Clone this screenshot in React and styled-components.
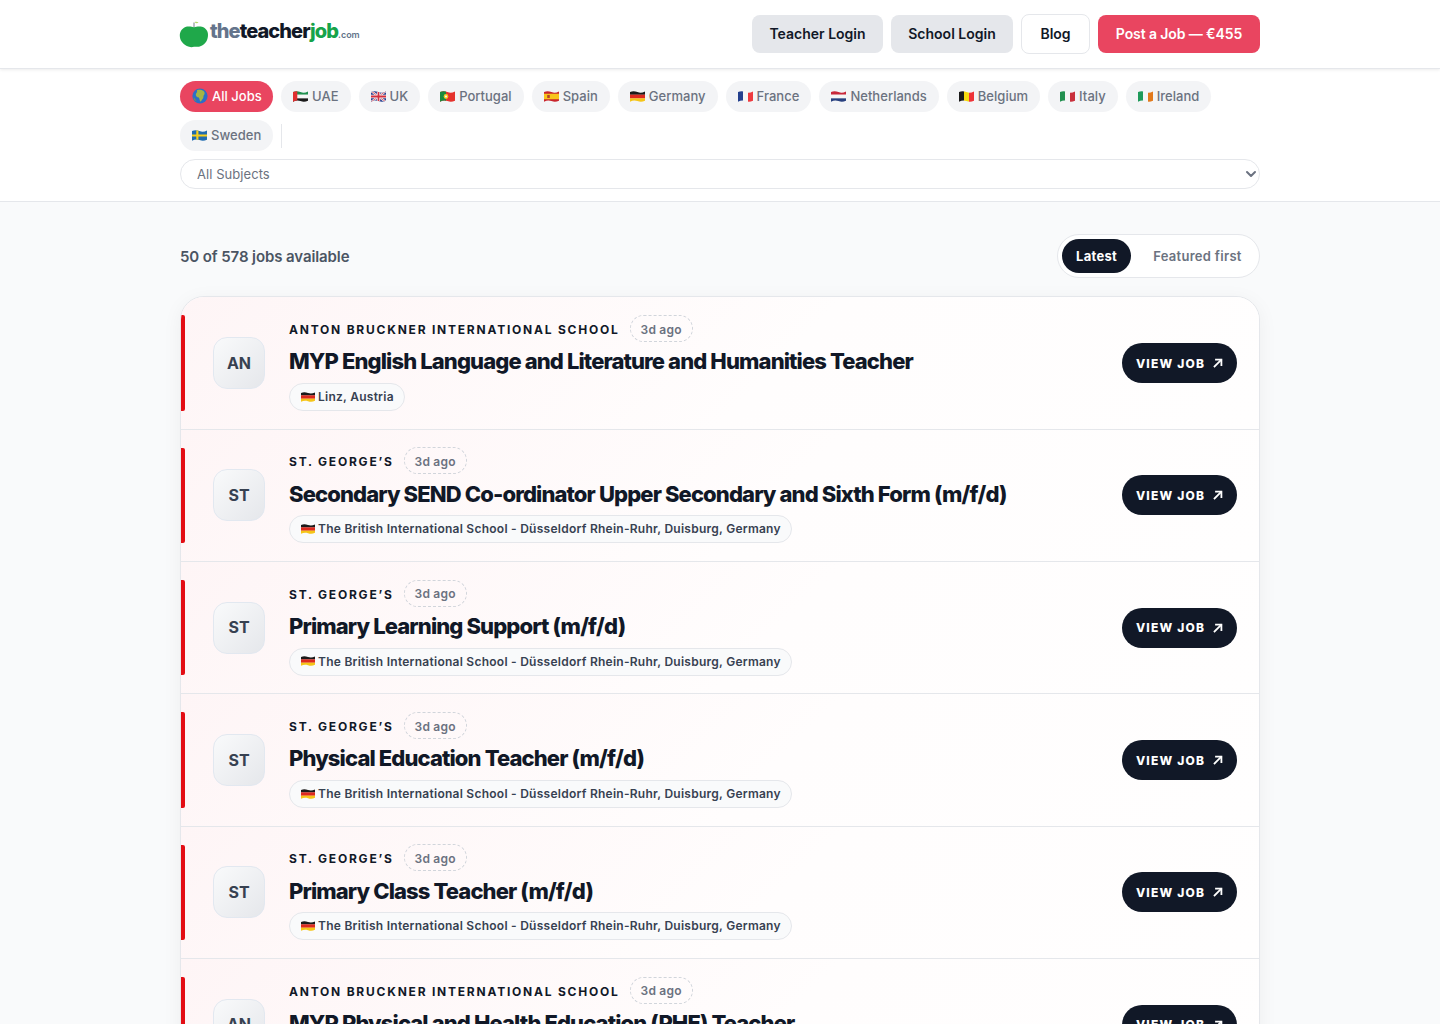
import React, { useId } from 'react';
import styled, { createGlobalStyle } from 'styled-components';

const GlobalStyle = createGlobalStyle`
    * { box-sizing: border-box; }
    html, body { margin: 0; padding: 0; background: #f9fafb; overflow-x: hidden; }
    body { font-family: Inter, "Liberation Sans", sans-serif; color: #111827; }
    ::-webkit-scrollbar { display: none; }
`

const Header = styled.header`
    height: 69px;
    background: #fff;
    border-bottom: 1px solid #e5e7eb;
    box-shadow: 0 1px 3px rgba(0, 0, 0, 0.08);
    position: relative;
    z-index: 2;
`
const Wrap = styled.div`
    width: 1080px;
    margin: 0 auto;
`
const HeaderInner = styled(Wrap)`
    height: 68px;
    display: flex;
    align-items: center;
    justify-content: space-between;
`
const Logo = styled.a`
    display: flex;
    align-items: center;
    height: 30px;
`
const AppleSvg = styled.svg`
    margin-left: -1px;
`
const LogoText = styled.span`
    font-size: 20px;
    font-weight: 800;
    letter-spacing: -0.92px;
    line-height: 30px;
    margin-left: 1px;
    margin-top: -2px;
`
const LogoPart = styled.span`
    color: ${p => p.$color};
`
const LogoCom = styled.span`
    font-size: 9px;
    font-weight: 600;
    letter-spacing: 0;
    color: #64748b;
`
const Nav = styled.nav`
    display: flex;
    gap: 8px;
    align-items: center;
`
const NavButton = styled.a`
    width: ${p => p.$width}px;
    height: ${p => p.$variant === 'outline' ? '40px' : '38px'};
    display: flex;
    align-items: center;
    justify-content: center;
    padding-bottom: 1px;
    border-radius: 8px;
    font-size: 14px;
    font-weight: 600;
    letter-spacing: ${p => p.$variant === 'primary' ? '-0.1px' : '0'};
    color: ${p => p.$variant === 'primary' ? '#fff' : '#111827'};
    background: ${p => p.$variant === 'primary' ? '#e94560' : p.$variant === 'outline' ? '#fff' : '#e5e7eb'};
    border: ${p => p.$variant === 'outline' ? '1px solid #e5e7eb' : 'none'};
`

const Filters = styled.section`
    background: #fff;
    border-bottom: 1px solid #e5e7eb;
    height: 133px;
    padding-top: 12px;
`
const PillRow = styled.div`
    display: flex;
    flex-wrap: wrap;
    gap: 8px;
    align-items: center;
`
const Pill = styled.a`
    height: 31px;
    padding: 0 ${p => p.$active ? '11.2px' : '12px'} 1px 12px;
    display: flex;
    align-items: center;
    gap: 4px;
    border-radius: 16px;
    font-size: 13px;
    font-weight: 500;
    letter-spacing: 0.025px;
    white-space: nowrap;
    color: ${p => p.$active ? '#fff' : '#6b7280'};
    background: ${p => p.$active ? '#e94560' : '#f3f4f6'};
`
const Divider = styled.span`
    width: 1px;
    height: 24px;
    background: #e5e7eb;
`
const SelectBox = styled.div`
    position: relative;
    margin-top: 8px;
`
const Select = styled.select`
    display: block;
    width: 100%;
    height: 30px;
    appearance: none;
    background: #fff;
    border: 1px solid #e5e7eb;
    border-radius: 15px;
    padding: 0 16px;
    font-family: inherit;
    font-size: 13px;
    letter-spacing: 0.06px;
    color: #6b7280;
`
const Chevron = styled.svg`
    position: absolute;
    right: 1px;
    top: 9px;
    pointer-events: none;
`

const Main = styled(Wrap)`
    padding-top: 32px;
`
const CountRow = styled.div`
    display: flex;
    align-items: center;
    justify-content: space-between;
    height: 44px;
    margin-bottom: 18.4px;
`
const Count = styled.p`
    margin: 0;
    font-size: 15px;
    font-weight: 600;
    letter-spacing: -0.1px;
    color: #4b5563;
`
const SortToggle = styled.div`
    height: 44px;
    width: 203px;
    display: flex;
    align-items: center;
    padding: 0 4px;
    background: #fff;
    border: 1px solid #e5e7eb;
    border-radius: 22px;
`
const SortOption = styled.span`
    height: 34px;
    padding: 0 14px;
    margin-right: ${p => p.$active ? '8px' : '0'};
    display: flex;
    align-items: center;
    border-radius: 17px;
    font-size: 13px;
    font-weight: ${p => p.$active ? 700 : 600};
    letter-spacing: 0.3px;
    white-space: nowrap;
    color: ${p => p.$active ? '#fff' : '#6b7280'};
    background: ${p => p.$active ? '#111827' : 'transparent'};
`

const JobList = styled.div`
    background: #fff;
    border: 1px solid #e5e7eb;
    border-radius: 24px;
    box-shadow: 0 4px 20px rgba(15, 23, 42, 0.05);
    overflow: hidden;
`
const JobRow = styled.article`
    position: relative;
    height: 132.35px;
    display: flex;
    align-items: center;
    padding: 0 22px 0 32px;
    border-bottom: 1px solid #e5e7eb;
    background: linear-gradient(135deg, #fef5f6 0%, #fffdfd 55%, #fffefe 100%);
`
const RedBar = styled.span`
    position: absolute;
    left: 0;
    top: 18px;
    bottom: 18px;
    width: 4px;
    border-radius: 0 2px 2px 0;
    background: #e30d14;
`
const Avatar = styled.div`
    width: 52px;
    height: 52px;
    flex: none;
    display: flex;
    align-items: center;
    justify-content: center;
    padding-bottom: 1px;
    border: 1px solid #e2e8f0;
    border-radius: 14px;
    background: linear-gradient(135deg, #f9fafb, #e5e7eb);
    font-size: 16px;
    font-weight: 700;
    color: #374151;
`
const JobBody = styled.div`
    flex: 1;
    min-width: 0;
    margin-left: 24px;
`
const MetaRow = styled.div`
    display: flex;
    align-items: center;
    gap: 10px;
    height: 27px;
`
const School = styled.span`
    padding-top: 2px;
    font-size: 12px;
    font-weight: 700;
    letter-spacing: 1.78px;
    color: #111827;
    text-transform: uppercase;
`
const Posted = styled.span`
    height: 27px;
    padding: 1px 10px 0;
    display: flex;
    align-items: center;
    border: 1px dashed #d1d5db;
    border-radius: 14px;
    font-size: 12px;
    font-weight: 600;
    letter-spacing: 0.2px;
    color: #6b7280;
`
const Title = styled.h2`
    margin: 4.4px 0 6.6px;
    font-size: 22px;
    line-height: 30px;
    font-weight: 800;
    letter-spacing: -0.88px;
    color: #111827;
`
const Location = styled.span`
    display: inline-flex;
    align-items: center;
    gap: 3px;
    height: 28px;
    padding: 0 10px 1px 11px;
    background: #f9fafb;
    border: 1px solid #e5e7eb;
    border-radius: 14px;
    font-size: 12px;
    font-weight: 600;
    letter-spacing: 0.255px;
    color: #374151;
`
const ViewButton = styled.a`
    width: 115px;
    height: 40px;
    flex: none;
    display: flex;
    align-items: center;
    justify-content: center;
    gap: 8px;
    border-radius: 20px;
    background: #111827;
    color: #fff;
    font-size: 12px;
    font-weight: 800;
    letter-spacing: 1.2px;
`

const stripes = {
    de: { dir: 'h', c: ['#1a1a1a', '#dd2a1f', '#f5c518'] },
    fr: { dir: 'v', c: ['#24408e', '#f5f5f5', '#ee3a3f'] },
    nl: { dir: 'h', c: ['#c8283a', '#f5f5f5', '#28407f'] },
    be: { dir: 'v', c: ['#1a1a1a', '#f5d90f', '#ee3338'] },
    it: { dir: 'v', c: ['#23904f', '#f5f5f5', '#c9303c'] },
    ie: { dir: 'v', c: ['#1f9a5a', '#f5f5f5', '#e27a1c'] },
}

// flag emoji are drawn by hand, there's no colour emoji font to rely on
const FlagArt = ({ code }) => {
    if (stripes[code]) {
        const { dir, c } = stripes[code]
        return c.map((col, i) => dir === 'h'
            ? <rect key={i} x="0" y={i * 10 / 3} width="14" height={10 / 3 + 0.1} fill={col} />
            : <rect key={i} x={i * 14 / 3} y="0" width={14 / 3 + 0.1} height="10" fill={col} />)
    }
    if (code === 'ae') return (
        <>
            <rect width="14" height="3.4" fill="#1f8f4e" />
            <rect y="3.4" width="14" height="3.3" fill="#f5f5f5" />
            <rect y="6.7" width="14" height="3.3" fill="#1a1a1a" />
            <rect width="4" height="10" fill="#e02f2f" />
        </>
    )
    if (code === 'uk') return (
        <>
            <rect width="14" height="10" fill="#2a3f8f" />
            <path d="M0 0L14 10M14 0L0 10" stroke="#f5f5f5" strokeWidth="2" />
            <path d="M0 0L14 10M14 0L0 10" stroke="#d3303f" strokeWidth="0.7" />
            <path d="M7 0V10M0 5H14" stroke="#f5f5f5" strokeWidth="3" />
            <path d="M7 0V10M0 5H14" stroke="#d3303f" strokeWidth="1.6" />
        </>
    )
    if (code === 'pt') return (
        <>
            <rect width="14" height="10" fill="#e5322d" />
            <rect width="5.6" height="10" fill="#1c8a3f" />
            <circle cx="5.6" cy="5" r="2.2" fill="#f4c61f" />
            <circle cx="5.6" cy="5" r="1" fill="#f5f5f5" />
        </>
    )
    if (code === 'es') return (
        <>
            <rect width="14" height="10" fill="#c9252c" />
            <rect y="2.5" width="14" height="5" fill="#f8c51c" />
            <rect x="3" y="3.6" width="2.4" height="2.8" fill="#b3432a" />
        </>
    )
    if (code === 'se') return (
        <>
            <rect width="14" height="10" fill="#1f6bb0" />
            <path d="M5 0V10M0 5H14" stroke="#f8cf1c" strokeWidth="2" />
        </>
    )
    return null
}

const FlagSvg = styled.svg`
    flex: none;
`
const Flag = ({ code, small }) => {
    const id = useId()
    return (
        <FlagSvg width={small ? 14 : 15} height={small ? 10 : 11} viewBox="0 0 14 10" preserveAspectRatio="none">
            <clipPath id={id}>
                <path d="M0 1C2.5 0 4.5 .2 7 1 9.5 1.8 11.5 1.6 14 .4V8.8C11.5 10 9.5 10 7 9.2 4.5 8.4 2.5 8.6 0 9.8Z" />
            </clipPath>
            <g clipPath={`url(#${id})`}>
                <FlagArt code={code} />
            </g>
        </FlagSvg>
    )
}
const Globe = () => (
    <svg width="16" height="16" viewBox="0 0 16 16">
        <circle cx="8" cy="8" r="7.6" fill="#2b6fc7" />
        <path d="M5 2.2C7.4 1.2 10.6 1.8 12 3.4 13 5 12.7 6 11.8 7.2 11 8.4 12 9.4 10.6 11 9.6 12.2 9 13.6 8.2 13.4 7.4 12 7.6 10.6 6.8 9.6 5 9.4 3.6 8.2 3.8 6.6 4 5 5.6 4.6 5 2.2Z" fill="#a4b545" />
        <path d="M1.4 9.5C2.6 10 3.6 11.6 4.4 13.6 2.8 12.8 1.8 11.2 1.4 9.5Z" fill="#7f9a3c" />
    </svg>
)
const AppleLogo = () => (
    <AppleSvg width="30" height="27" viewBox="0 0 30 27">
        <path d="M15 1.5V6" stroke="#6b7280" strokeWidth="0.9" fill="none" />
        <path d="M15.5 1C17 0.4 18.6 0.6 19.6 1.8 18 2.6 16.6 2.4 15.5 1Z" fill="#b6d96a" />
        <path d="M8 5.6C10.8 5 13 5.8 15 6.2 17 5.8 20 5 23 5.8 27 7 29 10.4 29 14 29 19 26.5 23 22 25 19.6 26.2 17.4 25.6 15 25.8 12.6 26.4 10 26.2 7.8 25 3.4 22.8 0.8 19 0.8 14.6 0.8 10.4 3.6 6.6 8 5.6Z" fill="#1fa84a" />
    </AppleSvg>
)
const ArrowIcon = () => (
    <svg width="10" height="10" viewBox="0 0 10 10" fill="none" stroke="#fff" strokeWidth="1.8" strokeLinecap="square">
        <path d="M1.6 8.4L8 2" />
        <path d="M3 1.6H8.4V7" />
    </svg>
)

const countries = [
    ['ae', 'UAE'], ['uk', 'UK'], ['pt', 'Portugal'], ['es', 'Spain'],
    ['de', 'Germany'], ['fr', 'France'], ['nl', 'Netherlands'], ['be', 'Belgium'],
    ['it', 'Italy'], ['ie', 'Ireland'], ['se', 'Sweden'],
]

const BRITISH = 'The British International School - Düsseldorf Rhein-Ruhr, Duisburg, Germany'
const jobs = [
    { initials: 'AN', school: 'Anton Bruckner International School', title: 'MYP English Language and Literature and Humanities Teacher', place: 'Linz, Austria' },
    { initials: 'ST', school: 'St. George’s', title: 'Secondary SEND Co-ordinator Upper Secondary and Sixth Form (m/f/d)', place: BRITISH },
    { initials: 'ST', school: 'St. George’s', title: 'Primary Learning Support (m/f/d)', place: BRITISH },
    { initials: 'ST', school: 'St. George’s', title: 'Physical Education Teacher (m/f/d)', place: BRITISH },
    { initials: 'ST', school: 'St. George’s', title: 'Primary Class Teacher (m/f/d)', place: BRITISH },
    { initials: 'AN', school: 'Anton Bruckner International School', title: 'MYP Physical and Health Education (PHE) Teacher', place: 'Linz, Austria' },
]

const App = () => (
    <>
        <GlobalStyle />
        <Header>
            <HeaderInner>
                <Logo>
                    <AppleLogo />
                    <LogoText>
                        <LogoPart $color="#64748b">the</LogoPart>
                        <LogoPart $color="#111827">teacher</LogoPart>
                        <LogoPart $color="#16a34a">job</LogoPart>
                        <LogoCom>.com</LogoCom>
                    </LogoText>
                </Logo>
                <Nav>
                    <NavButton $width={131}>Teacher Login</NavButton>
                    <NavButton $width={122}>School Login</NavButton>
                    <NavButton $width={69} $variant="outline">Blog</NavButton>
                    <NavButton $width={162} $variant="primary">Post a Job — €455</NavButton>
                </Nav>
            </HeaderInner>
        </Header>
        <Filters>
            <Wrap>
                <PillRow>
                    <Pill $active><Globe />All Jobs</Pill>
                    {countries.map(([code, name]) => (
                        <Pill key={code}><Flag code={code} />{name}</Pill>
                    ))}
                    <Divider />
                </PillRow>
                <SelectBox>
                    <Select defaultValue="all">
                        <option value="all">All Subjects</option>
                    </Select>
                    <Chevron width="16" height="12" viewBox="0 0 16 12" fill="none" stroke="#6b7280" strokeWidth="2" strokeLinecap="round" strokeLinejoin="round">
                        <path d="M4 4l4 4 4-4" />
                    </Chevron>
                </SelectBox>
            </Wrap>
        </Filters>
        <Main>
            <CountRow>
                <Count>50 of 578 jobs available</Count>
                <SortToggle>
                    <SortOption $active>Latest</SortOption>
                    <SortOption>Featured first</SortOption>
                </SortToggle>
            </CountRow>
            <JobList>
                {jobs.map((job, i) => (
                    <JobRow key={i}>
                        <RedBar />
                        <Avatar>{job.initials}</Avatar>
                        <JobBody>
                            <MetaRow>
                                <School>{job.school}</School>
                                <Posted>3d ago</Posted>
                            </MetaRow>
                            <Title>{job.title}</Title>
                            <Location><Flag code="de" small />{job.place}</Location>
                        </JobBody>
                        <ViewButton>VIEW JOB <ArrowIcon /></ViewButton>
                    </JobRow>
                ))}
            </JobList>
        </Main>
    </>
)

export default App;
